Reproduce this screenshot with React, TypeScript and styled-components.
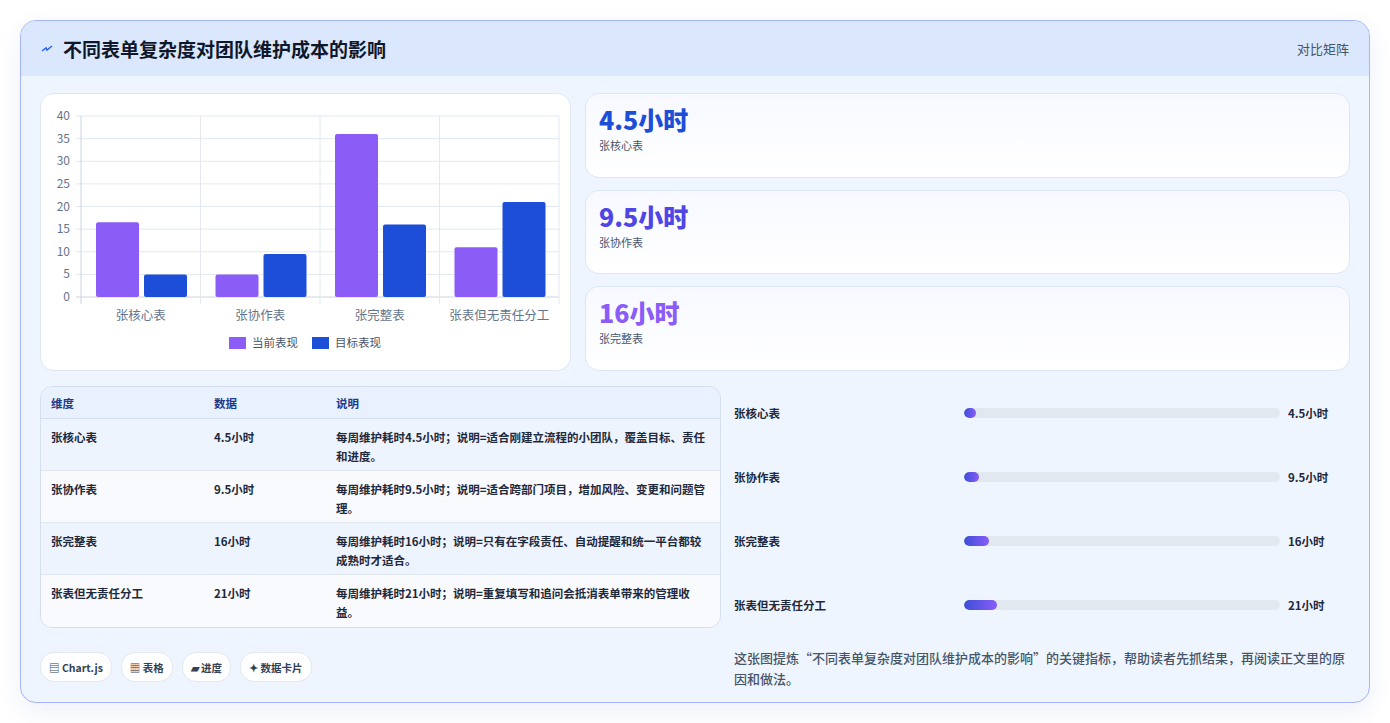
import React from "react";
import styled, { createGlobalStyle } from "styled-components";

const Global = createGlobalStyle`
  html, body { margin: 0; padding: 0; background: #ffffff; }
  body { font-family: "Noto Sans CJK SC", "Noto Sans", sans-serif; color: #1e293b; }
`;

const Page = styled.div`
  padding: 20px;
  width: 1390px;
  box-sizing: border-box;
`;

const Card = styled.div`
  width: 1350px;
  height: 683px;
  box-sizing: border-box;
  border: 1px solid #a5b4fc;
  border-radius: 16px;
  background: #eff5ff;
  overflow: hidden;
  box-shadow: 0 8px 24px rgba(30, 64, 175, 0.08);
  display: flex;
  flex-direction: column;
`;

const Header = styled.div`
  height: 55px;
  flex: none;
  background: #dbe7fd;
  display: flex;
  align-items: center;
  justify-content: space-between;
  padding: 0 20px;
`;

const Title = styled.h1`
  margin: 0;
  font-size: 19px;
  font-weight: 700;
  color: #0f172a;
  display: flex;
  align-items: center;
  gap: 10px;
`;

const Tag = styled.span`
  font-size: 13px;
  color: #475569;
`;

const Body = styled.div`
  padding: 17px 19px 0 19px;
  display: flex;
  flex-direction: column;
  gap: 15px;
`;

const TopRow = styled.div`
  display: flex;
  gap: 14px;
  height: 278px;
`;

const ChartCard = styled.div`
  width: 531px;
  flex: none;
  box-sizing: border-box;
  background: #fff;
  border: 1px solid #e0e7f3;
  border-radius: 14px;
`;

const Stats = styled.div`
  flex: 1;
  display: flex;
  flex-direction: column;
  gap: 12px;
`;

const StatCard = styled.div`
  flex: 1;
  box-sizing: border-box;
  border: 1px solid #dde6f5;
  border-radius: 14px;
  background: linear-gradient(180deg, #f7f9ff, #ffffff);
  padding: 8px 13px;
`;

const StatValue = styled.div<{ $c: string }>`
  font-size: 25px;
  font-weight: 800;
  color: ${(p) => p.$c};
  line-height: 34px;
`;

const StatLabel = styled.div`
  font-size: 11px;
  color: #475569;
  margin-top: 1px;
`;

const BottomRow = styled.div`
  display: flex;
  gap: 13px;
`;

const LeftCol = styled.div`
  width: 681px;
  flex: none;
  display: flex;
  flex-direction: column;
  gap: 24px;
`;

const Table = styled.table`
  width: 100%;
  table-layout: fixed;
  border-collapse: separate;
  border-spacing: 0;
  border: 1px solid #d5deec;
  border-radius: 12px;
  overflow: hidden;
  font-size: 11.5px;
`;

const Th = styled.th<{ $w?: number }>`
  text-align: left;
  font-weight: 700;
  color: #1e3a8a;
  background: #eaf1fe;
  padding: 0 10px;
  height: 32px;
  border-bottom: 1px solid #d5deec;
  width: ${(p) => (p.$w ? p.$w + "px" : "auto")};
  box-sizing: border-box;
`;

const Tr = styled.tr<{ $alt: boolean }>`
  background: ${(p) => (p.$alt ? "#f8fafd" : "#eef4fe")};
`;

const Td = styled.td<{ $last: boolean }>`
  vertical-align: top;
  padding: 9px 10px 0 10px;
  height: 52px;
  box-sizing: border-box;
  line-height: 19px;
  font-weight: 600;
  color: #1e293b;
  border-bottom: ${(p) => (p.$last ? "none" : "1px solid #e2e8f0")};
`;

const Chips = styled.div`
  display: flex;
  gap: 9px;
`;

const Chip = styled.span`
  height: 28px;
  padding: 0 8px;
  border-radius: 14px;
  background: #fff;
  border: 1px solid #e2e8f0;
  font-size: 10.5px;
  font-weight: 600;
  color: #334155;
  display: inline-flex;
  align-items: center;
  gap: 2px;
`;

const RightCol = styled.div`
  flex: 1;
  display: flex;
  flex-direction: column;
`;

const BarRow = styled.div`
  height: 64px;
  display: grid;
  grid-template-columns: 222px 316px 1fr;
  align-items: center;
  column-gap: 8px;
  font-size: 11.5px;
  font-weight: 600;
  color: #1e293b;
`;

const Bars = styled.div`
  margin-top: -5px;
`;

const Track = styled.div`
  height: 10px;
  border-radius: 5px;
  background: #e2e8f0;
  overflow: hidden;
`;

const Fill = styled.div`
  height: 100%;
  min-width: 12px;
  border-radius: 5px;
  background: linear-gradient(90deg, #3b4fd8, #8b5cf6);
`;

const Caption = styled.p`
  margin: 10px 0 0 0;
  font-size: 13px;
  line-height: 21px;
  color: #475569;
  font-weight: 500;
`;

const rows = [
  { name: "张核心表", v: "4.5小时", n: 4.5, d: "每周维护耗时4.5小时；说明=适合刚建立流程的小团队，覆盖目标、责任和进度。" },
  { name: "张协作表", v: "9.5小时", n: 9.5, d: "每周维护耗时9.5小时；说明=适合跨部门项目，增加风险、变更和问题管理。" },
  { name: "张完整表", v: "16小时", n: 16, d: "每周维护耗时16小时；说明=只有在字段责任、自动提醒和统一平台都较成熟时才适合。" },
  { name: "张表但无责任分工", v: "21小时", n: 21, d: "每周维护耗时21小时；说明=重复填写和追问会抵消表单带来的管理收益。" },
];

const cur = [16.5, 5, 36, 11];
const tgt = [5, 9.5, 16, 21];

function Chart() {
  const x0 = 40, x1 = 518, y0 = 22, yb = 203;
  const sc = (yb - y0) / 40;
  const cw = (x1 - x0) / 4;
  const txt = { fontFamily: "'Noto Sans CJK SC', sans-serif", fill: "#64748b" } as const;
  return (
    <svg width="529" height="276" viewBox="0 0 529 276">
      {[0, 5, 10, 15, 20, 25, 30, 35, 40].map((t) => (
        <g key={t}>
          <line x1={x0 - 5} x2={x1} y1={yb - t * sc} y2={yb - t * sc} stroke={t === 0 ? "#cbd5e1" : "#e2e8f0"} />
          <text x={x0 - 11} y={yb - t * sc + 4} textAnchor="end" fontSize="12" {...txt}>{t}</text>
        </g>
      ))}
      {[0, 1, 2, 3, 4].map((i) => (
        <line key={i} x1={x0 + i * cw} x2={x0 + i * cw} y1={y0} y2={yb + 7} stroke={i === 0 ? "#cbd5e1" : "#e2e8f0"} />
      ))}
      {rows.map((r, i) => {
        const bx = x0 + i * cw + 15;
        return (
          <g key={i}>
            <rect x={bx} y={yb - cur[i] * sc} width={43} height={cur[i] * sc} rx="2" fill="#8b5cf6" />
            <rect x={bx + 48} y={yb - tgt[i] * sc} width={43} height={tgt[i] * sc} rx="2" fill="#1d4ed8" />
            <text x={x0 + i * cw + cw / 2} y={226} textAnchor="middle" fontSize="12.5" {...txt}>{r.name}</text>
          </g>
        );
      })}
      <rect x={188} y={243} width={17} height={12} fill="#8b5cf6" />
      <text x={211} y={253} fontSize="11.5" {...txt} fill="#475569">当前表现</text>
      <rect x={271} y={243} width={17} height={12} fill="#1d4ed8" />
      <text x={294} y={253} fontSize="11.5" {...txt} fill="#475569">目标表现</text>
    </svg>
  );
}

export default function App() {
  return (
    <Page>
      <Global />
      <Card>
        <Header>
          <Title>
            <svg width="12" height="10" viewBox="0 0 12 10">
              <path d="M1 7 L5 4 L6 6 L11 2" stroke="#2563eb" strokeWidth="1.5" fill="none" />
            </svg>
            不同表单复杂度对团队维护成本的影响
          </Title>
          <Tag>对比矩阵</Tag>
        </Header>
        <Body>
          <TopRow>
            <ChartCard>
              <Chart />
            </ChartCard>
            <Stats>
              <StatCard>
                <StatValue $c="#1d4ed8">4.5小时</StatValue>
                <StatLabel>张核心表</StatLabel>
              </StatCard>
              <StatCard>
                <StatValue $c="#4f46e5">9.5小时</StatValue>
                <StatLabel>张协作表</StatLabel>
              </StatCard>
              <StatCard>
                <StatValue $c="#8b5cf6">16小时</StatValue>
                <StatLabel>张完整表</StatLabel>
              </StatCard>
            </Stats>
          </TopRow>
          <BottomRow>
            <LeftCol>
              <Table>
                <thead>
                  <tr>
                    <Th $w={163}>维度</Th>
                    <Th $w={122}>数据</Th>
                    <Th>说明</Th>
                  </tr>
                </thead>
                <tbody>
                  {rows.map((r, i) => (
                    <Tr key={i} $alt={i % 2 === 1}>
                      <Td $last={i === 3}>{r.name}</Td>
                      <Td $last={i === 3}>{r.v}</Td>
                      <Td $last={i === 3}>{r.d}</Td>
                    </Tr>
                  ))}
                </tbody>
              </Table>
              <Chips>
                <Chip>▤ Chart.js</Chip>
                <Chip>▦ 表格</Chip>
                <Chip>▰ 进度</Chip>
                <Chip>✦ 数据卡片</Chip>
              </Chips>
            </LeftCol>
            <RightCol>
              <Bars>
                {rows.map((r, i) => (
                  <BarRow key={i}>
                    <span>{r.name}</span>
                    <Track>
                      <Fill style={{ width: `${(r.n / 200) * 100}%` }} />
                    </Track>
                    <span>{r.v}</span>
                  </BarRow>
                ))}
              </Bars>
              <Caption>这张图提炼“不同表单复杂度对团队维护成本的影响”的关键指标，帮助读者先抓结果，再阅读正文里的原因和做法。</Caption>
            </RightCol>
          </BottomRow>
        </Body>
      </Card>
    </Page>
  );
}
